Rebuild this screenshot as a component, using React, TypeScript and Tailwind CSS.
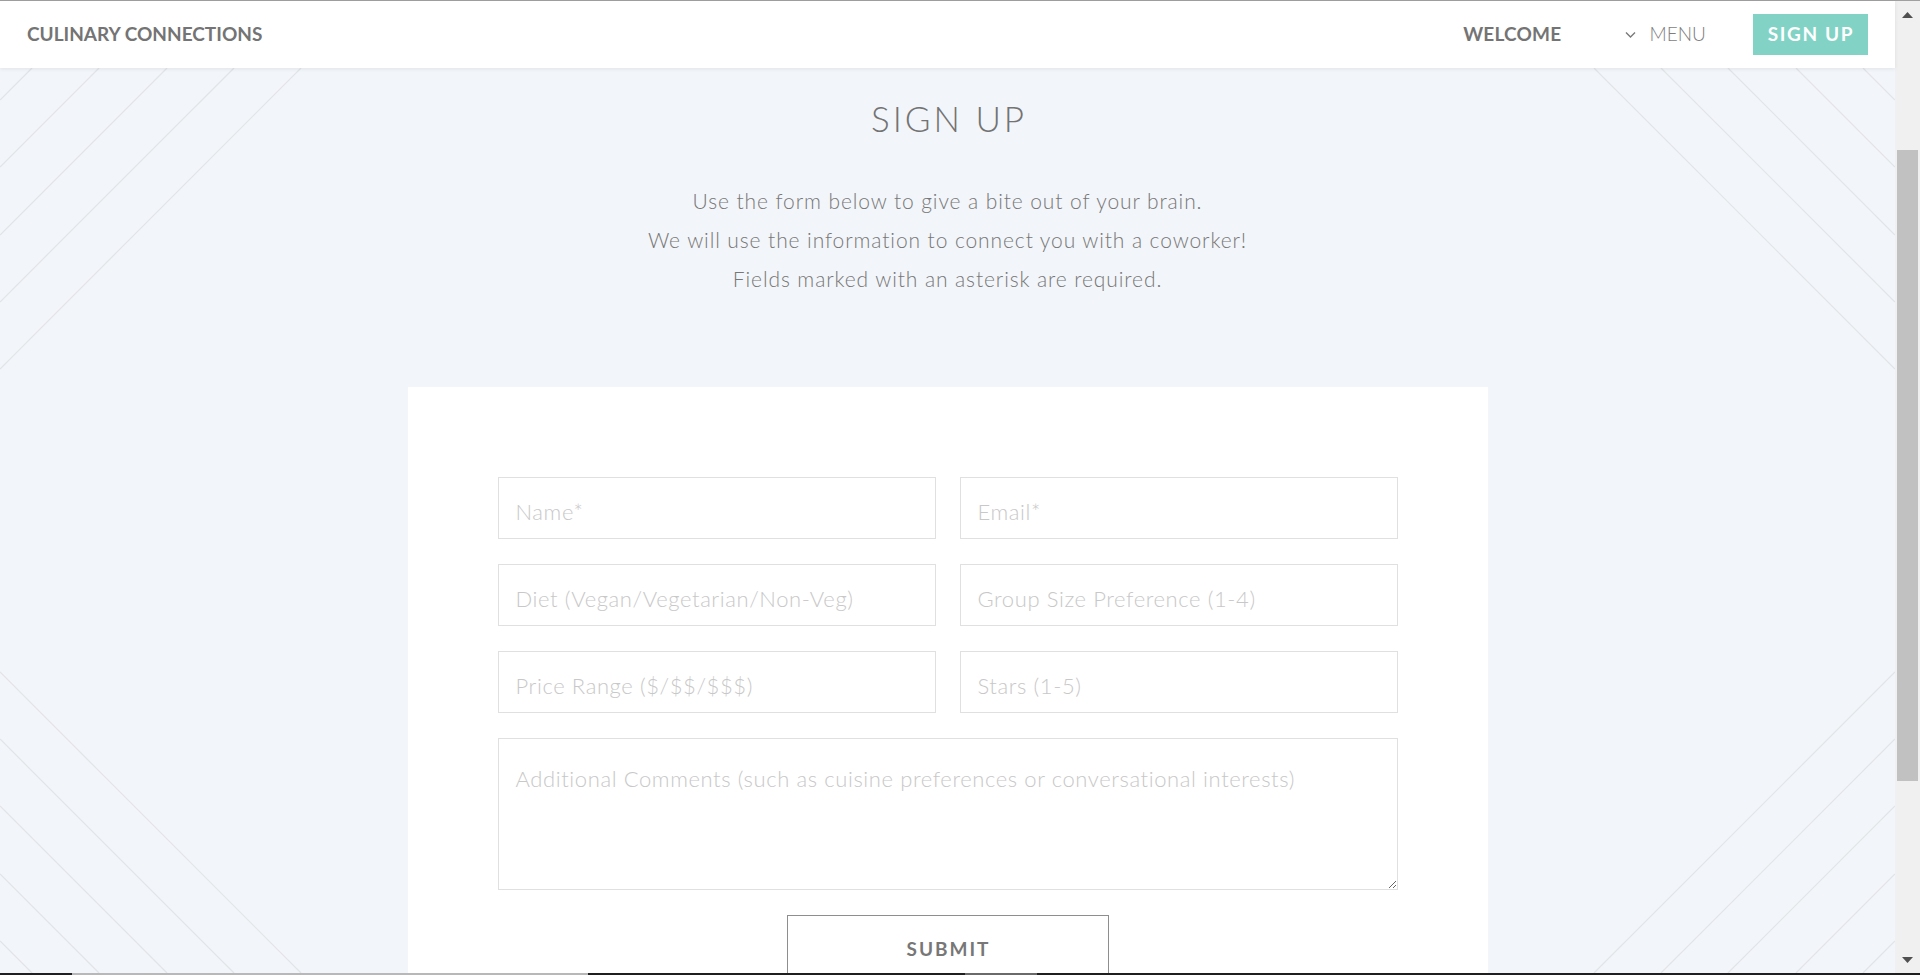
import React from 'react';

// distances of the decorative corner lines from the corner
const cornerLines = [32, 99, 167, 234, 301];

function Corner({ pos }: { pos: 'tl' | 'tr' | 'bl' | 'br' }) {
    const cls = {
        tl: 'absolute left-0 top-0',
        tr: 'absolute right-0 top-0',
        bl: 'absolute left-0 bottom-0',
        br: 'absolute right-0 bottom-0',
    }[pos];
    return (
        <svg className={cls + ' pointer-events-none'} width="310" height="310" viewBox="0 0 310 310">
            {cornerLines.map((d) => {
                let p = { x1: d, y1: 0, x2: 0, y2: d };
                if (pos === 'tr') p = { x1: 310 - d, y1: 0, x2: 310, y2: d };
                if (pos === 'bl') p = { x1: 0, y1: 310 - d, x2: d, y2: 310 };
                if (pos === 'br') p = { x1: 310, y1: 310 - d, x2: 310 - d, y2: 310 };
                return <line key={d} {...p} stroke="#e2e4e8" strokeWidth="1.2" />;
            })}
        </svg>
    );
}

function Header() {
    return (
        <header className="relative z-10 flex h-[67px] shrink-0 items-center bg-white px-[27px] shadow-[0_1px_4px_rgba(0,0,0,0.08)]">
            <div className="text-[19px] font-bold text-[#747474]">CULINARY CONNECTIONS</div>
            <div className="ml-auto flex items-center">
                <a className="text-[19px] font-bold tracking-[0.2px] text-[#747474]">WELCOME</a>
                <svg className="ml-[64px]" width="11" height="7" viewBox="0 0 11 7">
                    <path d="M1 1.5l4.5 4.5 4.5-4.5" fill="none" stroke="#7a7a7a" strokeWidth="1.4" />
                </svg>
                <a className="ml-[13px] text-[19px] font-light text-[#7e7e7e]">MENU</a>
                <button className="ml-[47px] flex h-[41px] items-center bg-[#82d3c5] pl-[15px] pr-[14px] text-[19px] font-bold tracking-[1.6px] text-white">
                    SIGN UP
                </button>
            </div>
        </header>
    );
}

function Field({ placeholder }: { placeholder: string }) {
    return (
        <input
            placeholder={placeholder}
            className="h-[62px] w-full border border-[#e0e0e0] bg-white pl-[17px] pr-[17px] pt-[6px] text-[22px] font-light tracking-[0.6px] text-[#555] outline-none placeholder:text-[#c8c8c8]"
        />
    );
}

export default function App() {
    return (
        <div className="flex h-[975px] w-[1920px] flex-col overflow-hidden bg-white font-[Lato,sans-serif]">
            <div className="h-[1px] shrink-0 bg-[#a0a0a0]" />
            <div className="flex h-[972px] shrink-0">
                <div className="flex flex-1 flex-col">
                    <Header />
                    <main className="relative flex flex-1 flex-col items-center overflow-hidden bg-[#f2f5f9]">
                        <Corner pos="tl" />
                        <Corner pos="tr" />
                        <Corner pos="bl" />
                        <Corner pos="br" />
                        <h1 className="relative pt-[29px] pl-[3px] text-[35px] font-light leading-[42px] tracking-[3px] text-[#737373]">SIGN UP</h1>
                        <div className="relative mt-[42px] text-center text-[21px] font-light leading-[39px] tracking-[0.9px] text-[#777]">
                            <p>Use the form below to give a bite out of your brain.</p>
                            <p>We will use the information to connect you with a coworker!</p>
                            <p>Fields marked with an asterisk are required.</p>
                        </div>
                        <div className="relative mt-[89px] w-[1080px] shrink-0 bg-white px-[90px] pb-[60px] pt-[90px]">
                            <div className="grid grid-cols-2 gap-x-[24px] gap-y-[25px]">
                                <Field placeholder="Name*" />
                                <Field placeholder="Email*" />
                                <Field placeholder="Diet (Vegan/Vegetarian/Non-Veg)" />
                                <Field placeholder="Group Size Preference (1-4)" />
                                <Field placeholder="Price Range ($/$$/$$$)" />
                                <Field placeholder="Stars (1-5)" />
                                <textarea
                                    placeholder="Additional Comments (such as cuisine preferences or conversational interests)"
                                    className="col-span-2 h-[152px] w-full border border-[#e0e0e0] bg-white px-[17px] pt-[23px] text-[22px] font-light tracking-[0.6px] text-[#555] outline-none placeholder:text-[#c8c8c8]"
                                />
                            </div>
                            <div className="mt-[25px] flex justify-center">
                                <button className="h-[80px] w-[322px] border border-[#8e8e8e] pb-[12px] pl-[2px] text-[19px] font-bold tracking-[2px] text-[#777]">
                                    SUBMIT
                                </button>
                            </div>
                        </div>
                    </main>
                </div>
                {/* fake scrollbar */}
                <div className="flex w-[25px] shrink-0 flex-col items-center bg-[#f0f0f0]">
                    <svg className="mt-[11px]" width="11" height="6" viewBox="0 0 11 6">
                        <path d="M0 6L5.5 0 11 6z" fill="#505050" />
                    </svg>
                    <div className="mt-[132px] h-[631px] w-[21px] bg-[#c1c1c1]" />
                    <div className="flex-1" />
                    <svg className="mb-[10px]" width="11" height="6" viewBox="0 0 11 6">
                        <path d="M0 0h11L5.5 6z" fill="#505050" />
                    </svg>
                </div>
            </div>
            <div className="flex h-[2px] shrink-0 bg-[#1f1f1f]">
                <div className="w-[72px]" />
                <div className="w-[516px] bg-[#b8b8b8]" />
                <div className="w-[377px]" />
                <div className="w-[72px] bg-[#6a6a6a]" />
            </div>
        </div>
    );
}
